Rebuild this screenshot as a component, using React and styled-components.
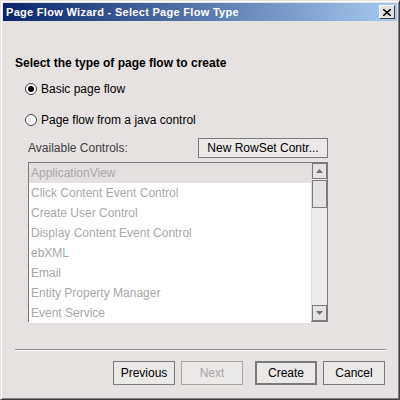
import React from 'react'
import styled, { createGlobalStyle } from 'styled-components'

const Global = createGlobalStyle`
  body { margin: 0; background: #e4e0e0; }
  * { box-sizing: border-box; }
`

const Frame = styled.div`
  width: 400px;
  height: 400px;
  background: #e6e2e2;
  border-top: 1px solid #e6e2e2;
  border-left: 1px solid #e6e2e2;
  border-right: 1px solid #404040;
  border-bottom: 1px solid #404040;
  box-shadow: inset 1px 1px 0 #ffffff, inset -1px -1px 0 #808080;
  padding: 2px;
  display: flex;
  flex-direction: column;
  font-family: "Liberation Sans", Arial, sans-serif;
`

const TitleBar = styled.div`
  height: 18px;
  background: linear-gradient(to right, #0a246a, #a6caf0);
  display: flex;
  align-items: center;
  justify-content: space-between;
  padding: 0 2px 0 3px;
`

const TitleText = styled.span`
  color: #fff;
  font-weight: bold;
  font-size: 11px;
  letter-spacing: 0.3px;
`

const CloseButton = styled.div`
  width: 16px;
  height: 14px;
  background: #e4e0e0;
  border-top: 1px solid #fff;
  border-left: 1px solid #fff;
  border-right: 1px solid #404040;
  border-bottom: 1px solid #404040;
  display: flex;
  align-items: center;
  justify-content: center;
`

const Body = styled.div`
  flex: 1;
  display: flex;
  flex-direction: column;
  padding: 35px 12px 0 12px;
`

const Heading = styled.div`
  font-weight: bold;
  font-size: 12px;
  color: #000;
  height: 14px;
  line-height: 14px;
`

const RadioRow = styled.label`
  display: flex;
  align-items: center;
  gap: 4px;
  margin-left: 10px;
  margin-top: ${p => p.$top}px;
  font-size: 12px;
  color: #000;
  height: 14px;
`

const RadioCircle = styled.span`
  width: 12px;
  height: 12px;
  border-radius: 50%;
  border: 1px solid #404040;
  background: #fff;
  display: flex;
  align-items: center;
  justify-content: center;
  &::after {
    content: '';
    width: 6px;
    height: 6px;
    border-radius: 50%;
    background: ${p => (p.$checked ? '#000' : 'transparent')};
  }
`

const ControlsHeader = styled.div`
  display: flex;
  align-items: center;
  justify-content: space-between;
  margin: 11px 0 0 13px;
  width: 300px;
  font-size: 12px;
  color: #404040;
`

const Button = styled.div`
  height: ${p => p.$h || 24}px;
  width: ${p => p.$w || 62}px;
  display: flex;
  align-items: center;
  justify-content: center;
  font-size: 12px;
  color: ${p => (p.$disabled ? '#a8a4a4' : '#000')};
  background: #ebe8e8;
  border: 1px solid ${p => (p.$disabled ? '#a8a4a4' : '#7a7a7a')};
  box-shadow: ${p => (p.$default ? 'inset 0 0 0 1px #7a7a7a' : 'none')};
`

const ListBox = styled.div`
  margin: 4px 0 0 13px;
  width: 300px;
  height: 160px;
  border: 1px solid #7a7a7a;
  display: flex;
  background: #fff;
`

const Items = styled.div`
  flex: 1;
  display: flex;
  flex-direction: column;
`

const Item = styled.div`
  height: 20px;
  line-height: 20px;
  padding-left: 2px;
  font-size: 12px;
  color: #a8a8a8;
  background: ${p => (p.$selected ? '#e4e0e0' : '#fff')};
`

const ScrollBar = styled.div`
  width: 16px;
  background: #eceaea;
  border-left: 1px solid #ddd;
  display: flex;
  flex-direction: column;
  justify-content: space-between;
  position: relative;
`

const ArrowBtn = styled.div`
  height: 16px;
  border: 1px solid #7a7a7a;
  background: #e6e2e2;
  display: flex;
  align-items: center;
  justify-content: center;
`

const Thumb = styled.div`
  position: absolute;
  top: 17px;
  left: 0;
  right: 0;
  height: 28px;
  border: 1px solid #7a7a7a;
  background: #e6e2e2;
`

const Separator = styled.div`
  margin: 27px 0 0 0;
  height: 2px;
  width: 371px;
  border-top: 1px solid #8a8a8a;
  border-bottom: 1px solid #fff;
`

const Footer = styled.div`
  display: flex;
  justify-content: flex-end;
  margin-top: 10px;
  width: 370px;
`

const Gap = styled.div`
  width: ${p => p.$w}px;
`

const Triangle = ({ up }) => (
  <svg width="7" height="4" viewBox="0 0 7 4">
    <path d={up ? 'M0 4 L3.5 0 L7 4 Z' : 'M0 0 L3.5 4 L7 0 Z'} fill="#707070" />
  </svg>
)

const items = [
  'ApplicationView',
  'Click Content Event Control',
  'Create User Control',
  'Display Content Event Control',
  'ebXML',
  'Email',
  'Entity Property Manager',
  'Event Service',
]

export default function App() {
  return (
    <>
      <Global />
      <Frame>
        <TitleBar>
          <TitleText>Page Flow Wizard - Select Page Flow Type</TitleText>
          <CloseButton>
            <svg width="8" height="7" viewBox="0 0 8 7">
              <path d="M0 0 L8 7 M8 0 L0 7" stroke="#000" strokeWidth="1.6" />
            </svg>
          </CloseButton>
        </TitleBar>
        <Body>
          <Heading>Select the type of page flow to create</Heading>
          <RadioRow $top={12}>
            <RadioCircle $checked />
            Basic page flow
          </RadioRow>
          <RadioRow $top={17}>
            <RadioCircle />
            Page flow from a java control
          </RadioRow>
          <ControlsHeader>
            Available Controls:
            <Button $w={130} $h={20}>New RowSet Contr...</Button>
          </ControlsHeader>
          <ListBox>
            <Items>
              {items.map((it, i) => (
                <Item key={it} $selected={i === 0}>{it}</Item>
              ))}
            </Items>
            <ScrollBar>
              <ArrowBtn><Triangle up /></ArrowBtn>
              <Thumb />
              <ArrowBtn><Triangle /></ArrowBtn>
            </ScrollBar>
          </ListBox>
          <Separator />
          <Footer>
            <Button>Previous</Button>
            <Gap $w={6} />
            <Button $disabled>Next</Button>
            <Gap $w={12} />
            <Button $default>Create</Button>
            <Gap $w={6} />
            <Button>Cancel</Button>
          </Footer>
        </Body>
      </Frame>
    </>
  )
}
